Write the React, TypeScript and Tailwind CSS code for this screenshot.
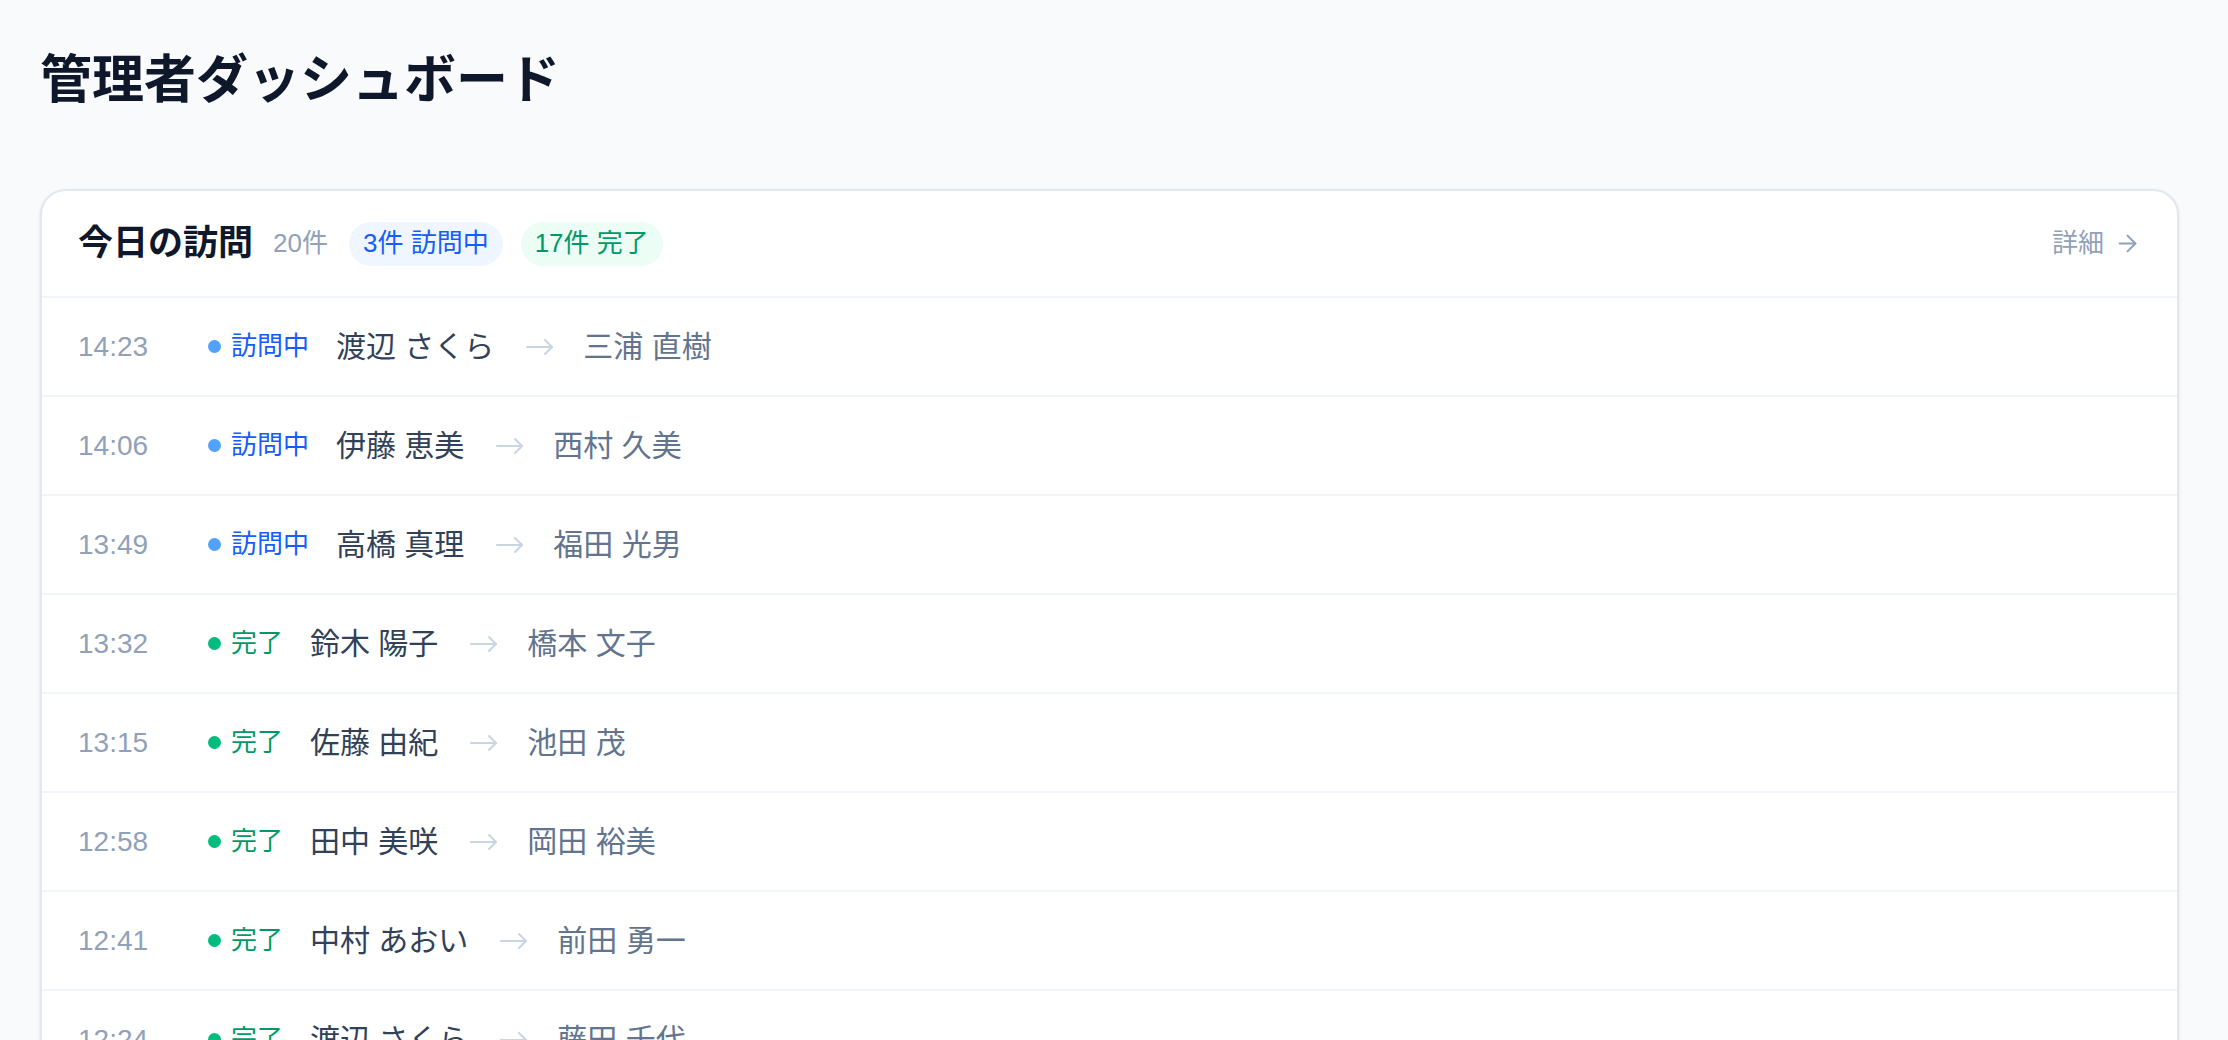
import React from 'react';

type Visit = {
  time: string;
  status: 'visiting' | 'done';
  staff: string;
  client: string;
};

const visits: Visit[] = [
  { time: '14:23', status: 'visiting', staff: '渡辺 さくら', client: '三浦 直樹' },
  { time: '14:06', status: 'visiting', staff: '伊藤 恵美', client: '西村 久美' },
  { time: '13:49', status: 'visiting', staff: '高橋 真理', client: '福田 光男' },
  { time: '13:32', status: 'done', staff: '鈴木 陽子', client: '橋本 文子' },
  { time: '13:15', status: 'done', staff: '佐藤 由紀', client: '池田 茂' },
  { time: '12:58', status: 'done', staff: '田中 美咲', client: '岡田 裕美' },
  { time: '12:41', status: 'done', staff: '中村 あおい', client: '前田 勇一' },
  { time: '12:24', status: 'done', staff: '渡辺 さくら', client: '藤田 千代' },
  { time: '12:07', status: 'done', staff: '伊藤 恵美', client: '石井 和子' },
  { time: '11:50', status: 'done', staff: '高橋 真理', client: '小林 正雄' },
];

const statusStyle = {
  visiting: { label: '訪問中', dot: 'bg-blue-400', text: 'text-blue-600' },
  done: { label: '完了', dot: 'bg-emerald-500', text: 'text-emerald-600' },
};

function RowArrow() {
  return (
    <svg width="28" height="18" viewBox="0 0 28 18" fill="none" stroke="currentColor" strokeWidth="2" strokeLinecap="round" strokeLinejoin="round" className="text-slate-300 shrink-0">
      <path d="M1 9h25" />
      <path d="M19 2l7 7-7 7" />
    </svg>
  );
}

function VisitRow({ visit }: { visit: Visit }) {
  const s = statusStyle[visit.status];
  return (
    <div className="flex items-center h-[99px] px-9 border-b-2 border-slate-100">
      <span className="w-[130px] shrink-0 text-[28px] text-slate-400">{visit.time}</span>
      <div className="flex items-center gap-[10px]">
        <span className={`w-[13px] h-[13px] rounded-full ${s.dot}`} />
        <span className={`text-[26px] ${s.text}`}>{s.label}</span>
      </div>
      <span className="ml-[27px] text-[30px] text-slate-700">{visit.staff}</span>
      <span className="ml-[32px] flex items-center">
        <RowArrow />
      </span>
      <span className="ml-[29px] text-[30px] text-slate-500">{visit.client}</span>
    </div>
  );
}

export default function App() {
  const visiting = visits.filter((v) => v.status === 'visiting').length;

  return (
    <div
      className="h-screen overflow-hidden bg-slate-50 pl-10 pr-[49px] pt-[48px]"
      style={{ fontFamily: '"Liberation Sans", "Noto Sans CJK JP", sans-serif' }}
    >
      <h1 className="text-[52px] leading-[64px] font-bold text-slate-900">管理者ダッシュボード</h1>

      <div className="mt-[77px] bg-white rounded-[26px] border-2 border-slate-200 shadow-sm overflow-hidden">
        {/* Header */}
        <div className="flex items-center justify-between h-[107px] px-9 border-b-2 border-slate-100">
          <div className="flex items-center">
            <h2 className="text-[35px] font-bold text-slate-900">今日の訪問</h2>
            <span className="ml-[20px] text-[26px] text-slate-400">20件</span>
            <span className="ml-[21px] flex items-center h-[44px] px-[14px] rounded-full bg-blue-50 text-[26px] text-blue-600">
              {visiting}件 訪問中
            </span>
            <span className="ml-[18px] flex items-center h-[44px] px-[14px] rounded-full bg-emerald-50 text-[26px] text-emerald-600">
              17件 完了
            </span>
          </div>
          <button className="flex items-center gap-[10px] text-[26px] text-slate-400">
            詳細
            <svg width="27" height="27" viewBox="0 0 24 24" fill="none" stroke="currentColor" strokeWidth="1.8" strokeLinecap="round" strokeLinejoin="round">
              <path d="M5 12h14" />
              <path d="m12 5 7 7-7 7" />
            </svg>
          </button>
        </div>

        {/* Rows */}
        {visits.map((v, i) => (
          <VisitRow key={i} visit={v} />
        ))}
      </div>
    </div>
  );
}
